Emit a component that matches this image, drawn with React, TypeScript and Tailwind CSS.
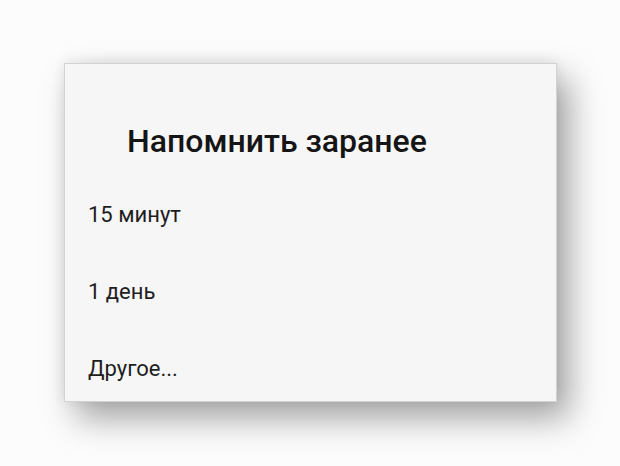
import React from "react";

const options = ["15 минут", "1 день", "Другое..."];

export default function App() {
  return (
    <div className="w-[620px] h-[466px] overflow-hidden bg-[#fcfcfc] pt-[63px] pl-[64px]" style={{ fontFamily: "Roboto, 'Noto Sans', sans-serif" }}>
      <div className="w-[493px] h-[339px] bg-[#f7f6f6] border border-[#d2d2d2] shadow-[12px_16px_32px_rgba(0,0,0,0.36),0_-2px_12px_rgba(0,0,0,0.08)] pt-[61px]">
        <h2 className="pl-[62px] text-[32px] leading-[32px] font-medium text-[#151515]">
          Напомнить заранее
        </h2>
        <ul className="mt-[47px] flex flex-col gap-[55px] pl-[23px]">
          {options.map((opt) => (
            <li key={opt} className="text-[22px] leading-[22px] text-[#1e1e1e]">
              {opt}
            </li>
          ))}
        </ul>
      </div>
    </div>
  );
}
